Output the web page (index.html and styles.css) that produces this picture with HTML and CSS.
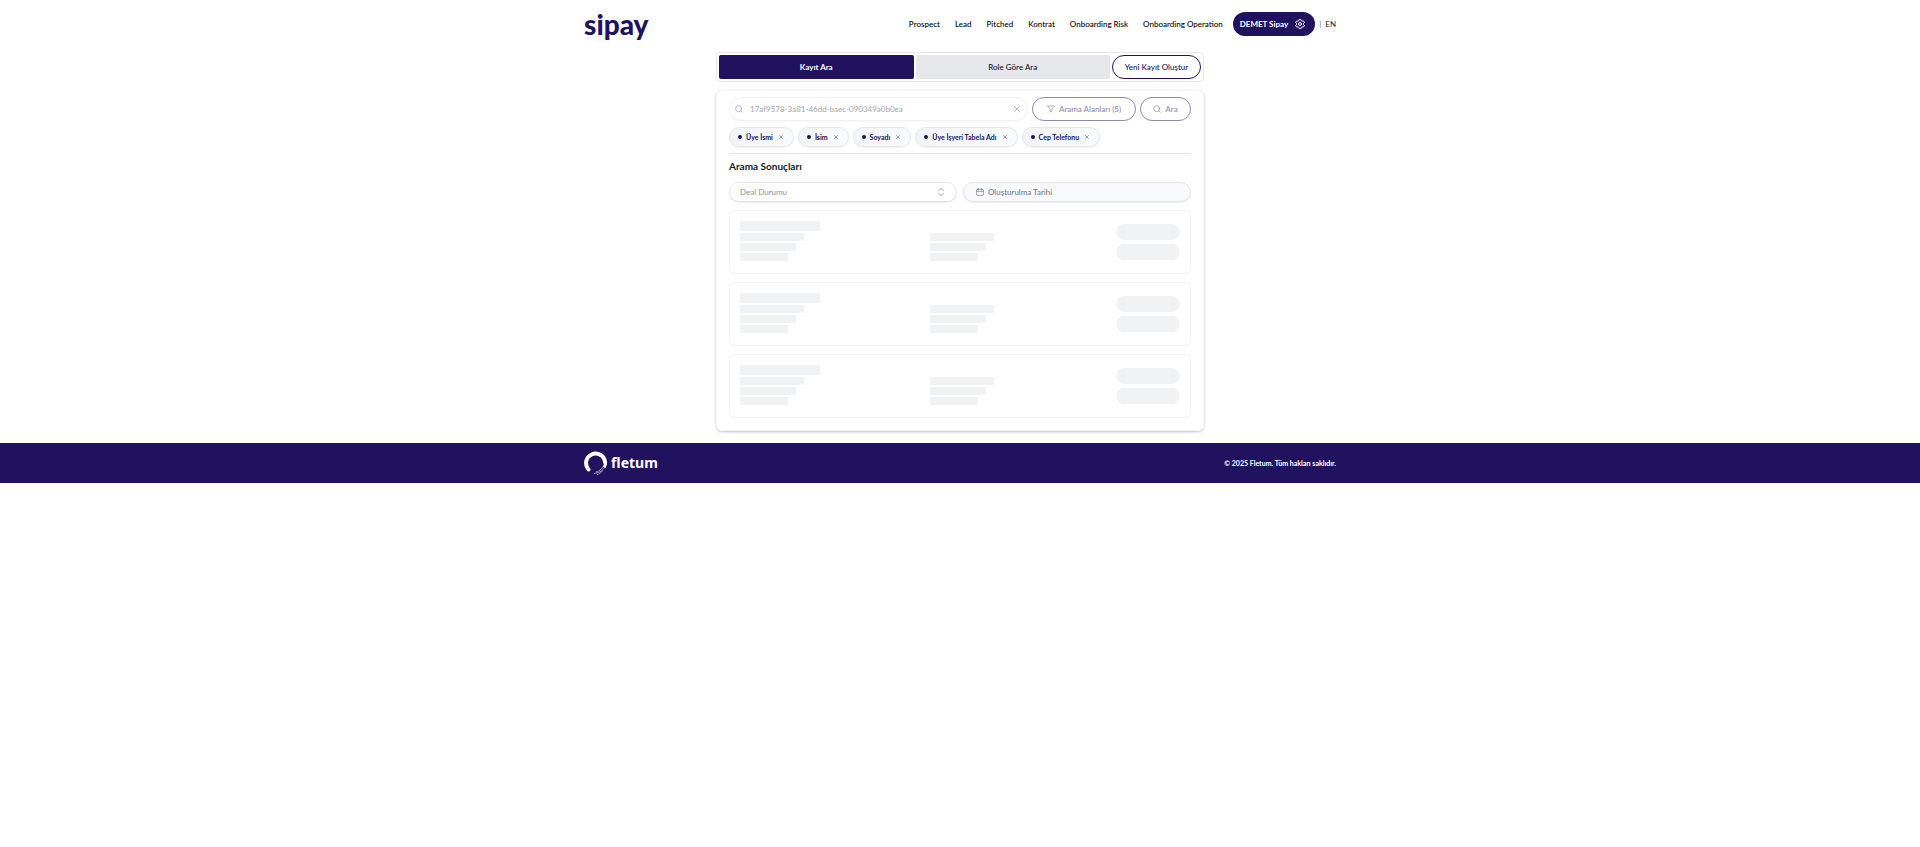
FILE: index.html
```html
<!DOCTYPE html>
<html lang="tr">
<head>
<meta charset="utf-8">
<meta name="viewport" content="width=device-width, initial-scale=1">
<title>Sipay</title>
<link rel="stylesheet" href="styles.css">
</head>
<body>
<header class="container header">
  <a class="brand" href="#">sipay</a>
  <div class="header-right">
    <nav class="nav">
      <a href="#">Prospect</a>
      <a href="#">Lead</a>
      <a href="#">Pitched</a>
      <a href="#">Kontrat</a>
      <a href="#">Onboarding Risk</a>
      <a href="#">Onboarding Operation</a>
    </nav>
    <button class="user" type="button">DEMET Sipay
      <svg class="gear" viewBox="0 0 24 24"><path d="M9.6 3.9c.1-.5.5-.9 1.1-.9h2.6c.5 0 1 .4 1.1.9l.2 1.3c.1.4.3.7.6.9l.3.1c.3.2.7.2 1.1.1l1.2-.5c.5-.2 1.1 0 1.4.5l1.3 2.2c.3.5.2 1.1-.3 1.4l-1 .8c-.3.3-.4.6-.4 1v.6c0 .4.1.7.4 1l1 .8c.4.4.5 1 .3 1.4l-1.3 2.2c-.3.5-.9.7-1.4.5l-1.2-.4c-.4-.1-.8-.1-1.1.1l-.2.1c-.3.2-.6.5-.6.9l-.2 1.3c-.1.5-.6.9-1.1.9h-2.6c-.5 0-1-.4-1.1-.9l-.2-1.3c-.1-.4-.3-.7-.6-.9l-.3-.1c-.3-.2-.7-.2-1.1-.1l-1.2.4c-.5.2-1.1 0-1.4-.5l-1.3-2.2c-.3-.5-.2-1.1.3-1.4l1-.8c.3-.3.4-.6.4-1v-.6c0-.4-.1-.7-.4-1l-1-.8c-.4-.4-.5-1-.3-1.4l1.3-2.2c.3-.5.9-.7 1.4-.5l1.2.5c.4.1.8.1 1.1-.1l.2-.1c.3-.2.6-.5.6-.9z"/><circle cx="12" cy="12" r="3"/></svg>
    </button>
    <span class="divider">|</span>
    <a class="lang" href="#">EN</a>
  </div>
</header>

<main class="main">
  <div class="tabs">
    <button class="tab tab-active" type="button">Kayıt Ara</button>
    <button class="tab" type="button">Role Göre Ara</button>
    <button class="outline create" type="button">Yeni Kayıt Oluştur</button>
  </div>

  <section class="panel">
    <form class="search-row">
      <div class="search">
        <svg class="icon" viewBox="0 0 24 24"><circle cx="11" cy="11" r="9"/><path d="m22 22-4.500-4.500"/></svg>
        <input type="text" aria-label="Ara" value="17af9578-3a81-46dd-baec-090349a0b0ea" disabled>
        <button class="clear" type="button" aria-label="Temizle"><svg class="icon" viewBox="0 0 24 24"><path d="M4 4l16 16M20 4L4 20"/></svg></button>
      </div>
      <button class="outline fields" type="button" disabled>
        <svg class="icon" viewBox="0 0 24 24"><path d="M2 3h20l-7.500 9.500v5.500l-5 3v-8.500z"/></svg>Arama Alanları (5)</button>
      <button class="outline go" type="button" disabled>
        <svg class="icon" viewBox="0 0 24 24"><circle cx="11" cy="11" r="9"/><path d="m22 22-4.500-4.500"/></svg>Ara</button>
    </form>

    <div class="chips">
      <span class="chip">Üye İsmi<button type="button" aria-label="Üye İsmi kaldır"><svg viewBox="0 0 24 24"><path d="M4 4l16 16M20 4L4 20"/></svg></button></span>
      <span class="chip">İsim<button type="button" aria-label="İsim kaldır"><svg viewBox="0 0 24 24"><path d="M4 4l16 16M20 4L4 20"/></svg></button></span>
      <span class="chip">Soyadı<button type="button" aria-label="Soyadı kaldır"><svg viewBox="0 0 24 24"><path d="M4 4l16 16M20 4L4 20"/></svg></button></span>
      <span class="chip">Üye İşyeri Tabela Adı<button type="button" aria-label="Üye İşyeri Tabela Adı kaldır"><svg viewBox="0 0 24 24"><path d="M4 4l16 16M20 4L4 20"/></svg></button></span>
      <span class="chip">Cep Telefonu<button type="button" aria-label="Cep Telefonu kaldır"><svg viewBox="0 0 24 24"><path d="M4 4l16 16M20 4L4 20"/></svg></button></span>
    </div>

    <h2 class="results-title">Arama Sonuçları</h2>

    <div class="filters">
      <div class="select-wrap">
        <select aria-label="Deal Durumu"><option>Deal Durumu</option></select>
        <svg class="icon select-icon" viewBox="0 0 24 24"><path d="M5 8l7-7 7 7M5 16l7 7 7-7"/></svg>
      </div>
      <button class="date" type="button">
        <svg class="icon" viewBox="0 0 24 24"><rect x="2" y="4" width="20" height="18" rx="2"/><path d="M2 10h20M7 1v5M17 1v5"/></svg>Oluşturulma Tarihi</button>
    </div>

    <div class="results">
      <div class="skeleton">
        <div class="cols"><div class="col"><i class="bar title"></i><i class="bar long"></i><i class="bar mid"></i><i class="bar short"></i></div><div class="col second"><i class="bar long"></i><i class="bar mid"></i><i class="bar short"></i></div></div>
        <div class="actions"><i class="pill"></i><i class="pill"></i></div>
      </div>
      <div class="skeleton">
        <div class="cols"><div class="col"><i class="bar title"></i><i class="bar long"></i><i class="bar mid"></i><i class="bar short"></i></div><div class="col second"><i class="bar long"></i><i class="bar mid"></i><i class="bar short"></i></div></div>
        <div class="actions"><i class="pill"></i><i class="pill"></i></div>
      </div>
      <div class="skeleton">
        <div class="cols"><div class="col"><i class="bar title"></i><i class="bar long"></i><i class="bar mid"></i><i class="bar short"></i></div><div class="col second"><i class="bar long"></i><i class="bar mid"></i><i class="bar short"></i></div></div>
        <div class="actions"><i class="pill"></i><i class="pill"></i></div>
      </div>
    </div>
  </section>
</main>

<footer class="footer">
  <div class="container footer-inner">
    <a class="fletum" href="#">
      <svg class="ring" viewBox="0 0 24 24"><path class="arc" d="M4.500 18.500A9.500 9.500 0 1 1 21 11"/><path class="taper" d="M19.500 10l3.500 0q.3 4-1.500 7l-2.300-1.300q1-3 .3-5.700z"/><path class="dust" d="M20.800 16q-3.300 5.600-10.500 6.500M19.500 15q-3 4.800-7.500 6M18.500 20q-2 2.500-5 3.500"/></svg>
      <span>fletum</span>
    </a>
    <span class="copy">© 2025 Fletum. Tüm hakları saklıdır.</span>
  </div>
</footer>
</body>
</html>
```

FILE: styles.css
```css
:root {
  --navy: #20125f;
  --line: #e5e7eb;
  --soft: #f1f2f4;
  --muted: #8d93a3;
}

* { box-sizing: border-box; }

body {
  margin: 0;
  background: #fff;
  color: #111827;
  font-family: Lato, "Noto Sans", sans-serif;
  font-size: 8px;
  line-height: 12px;
}

a { color: inherit; text-decoration: none; }

button, input, select {
  margin: 0;
  font: inherit;
  color: inherit;
}

button { cursor: pointer; }

.container {
  width: 100%;
  max-width: 768px;
  margin: 0 auto;
  padding: 0 8px;
}

.header {
  display: flex;
  align-items: center;
  justify-content: space-between;
  height: 48px;
}

.brand {
  color: var(--navy);
  font-size: 28px;
  font-weight: 900;
  line-height: 32px;
}

.header-right {
  display: flex;
  align-items: center;
  gap: 4px;
}

.nav {
  display: flex;
  gap: 15px;
  margin-right: 6px;
  font-weight: 500;
  color: #000;
}

.user {
  display: flex;
  align-items: center;
  gap: 6px;
  height: 24px;
  padding: 0 9px 0 7px;
  border: 0;
  border-radius: 12px;
  background: var(--navy);
  color: #fff;
  font-weight: 700;
}

svg {
  fill: none;
  stroke: currentColor;
  stroke-width: 2;
  stroke-linecap: round;
  stroke-linejoin: round;
  flex: none;
}

.gear {
  width: 12px;
  height: 12px;
}

.divider { color: #6b7280; }

.main {
  width: 100%;
  max-width: 488px;
  margin: 0 auto;
  padding: 4px 0 12px;
}

.tabs {
  display: flex;
  gap: 2px;
  padding: 2px;
  border: 1px solid var(--line);
  border-radius: 4px;
}

.tab {
  flex: 1;
  height: 24px;
  padding: 0;
  border: 0;
  border-radius: 2px;
  background: var(--line);
  font-weight: 500;
}

.tab-active {
  background: var(--navy);
  color: #fff;
  font-weight: 700;
}

.outline {
  display: flex;
  align-items: center;
  justify-content: center;
  gap: 4px;
  height: 24px;
  padding: 0;
  border: 1px solid var(--navy);
  border-radius: 12px;
  background: #fff;
  color: var(--navy);
  font-weight: 500;
  white-space: nowrap;
}

.outline:disabled { opacity: 0.5; }

.create { width: 89px; }
.fields { width: 104px; }
.go { width: 51px; }

.icon {
  width: 8px;
  height: 8px;
}

.panel {
  margin-top: 8px;
  padding: 6px 12px 12px;
  border: 1px solid #f3f4f6;
  border-radius: 6px;
  box-shadow: 0 1px 3px rgba(0, 0, 0, 0.15), 0 1px 2px rgba(0, 0, 0, 0.1);
}

.search-row {
  display: flex;
  gap: 4px;
}

.search {
  flex: 1;
  display: flex;
  align-items: center;
  gap: 7px;
  height: 24px;
  padding: 0 6px 0 5px;
  border: 1px solid #f1f2f4;
  border-radius: 12px;
  box-shadow: 0 1px 1px rgba(0, 0, 0, 0.03);
  color: #9297aa;
}

.search input {
  flex: 1;
  min-width: 0;
  padding: 0;
  border: 0;
  background: none;
  color: #a3a6ae;
}

.clear {
  display: flex;
  padding: 0;
  border: 0;
  background: none;
}

.chips {
  display: flex;
  flex-wrap: wrap;
  gap: 4px;
  padding: 6px 0;
  border-bottom: 1px solid var(--line);
}

.chip {
  display: flex;
  align-items: center;
  gap: 4px;
  height: 20px;
  padding: 0 10px 0 8px;
  border: 1px solid var(--line);
  border-radius: 10px;
  background: linear-gradient(90deg, #f3f4f6, #fafbfd);
  box-shadow: 0 1px 1px rgba(0, 0, 0, 0.05);
  color: var(--navy);
  font-size: 7px;
  font-weight: 700;
}

.chip::before {
  content: "";
  width: 4px;
  height: 4px;
  border-radius: 50%;
  background: var(--navy);
}

.chip button {
  display: flex;
  margin-left: 2px;
  padding: 0;
  border: 0;
  background: none;
  color: #6b6590;
}

.chip svg {
  width: 4px;
  height: 4px;
  stroke-width: 4;
}

.results-title {
  margin: 5px 0 9px;
  font-size: 10px;
  line-height: 14px;
  font-weight: 700;
}

.filters {
  display: grid;
  grid-template-columns: 1fr 1fr;
  gap: 6px;
}

.select-wrap { position: relative; }

.select-wrap select, .date {
  width: 100%;
  height: 20px;
  padding: 0 10px;
  border: 1px solid var(--line);
  border-radius: 10px;
  background: #fff;
  box-shadow: 0 1px 1px rgba(0, 0, 0, 0.08);
  color: var(--muted);
}

.select-wrap select {
  display: block;
  appearance: none;
}

.select-icon {
  position: absolute;
  top: 6px;
  right: 12px;
  color: #6b7280;
}

.date {
  display: flex;
  align-items: center;
  gap: 4px;
  padding: 0 12px;
  background: #f9fafb;
  color: #6b7280;
}

.results {
  display: flex;
  flex-direction: column;
  gap: 8px;
  margin-top: 8px;
}

.skeleton {
  display: flex;
  align-items: center;
  padding: 10px;
  border: 1px solid #f1f2f4;
  border-radius: 5px;
}

.cols {
  flex: 1;
  display: grid;
  grid-template-columns: 1fr 1fr;
  gap: 4px;
}

.col {
  display: flex;
  flex-direction: column;
  gap: 2px;
  padding-bottom: 2px;
}

.second { padding-top: 12px; }

.bar {
  height: 8px;
  border-radius: 1px;
  background: var(--soft);
}

.title { width: 80px; height: 10px; }
.long { width: 64px; }
.mid { width: 56px; }
.short { width: 48px; }

.actions {
  display: flex;
  flex-direction: column;
  gap: 4px;
}

.pill {
  width: 64px;
  height: 16px;
  border-radius: 8px;
  background: var(--soft);
}

.footer {
  background: var(--navy);
  color: #fff;
}

.footer-inner {
  display: flex;
  align-items: center;
  justify-content: space-between;
  height: 40px;
}

.fletum {
  display: flex;
  align-items: center;
  gap: 3px;
  font-family: "Noto Sans", sans-serif;
  font-size: 14px;
  font-weight: 700;
  line-height: 20px;
}

.ring { width: 24px; height: 24px; }
.arc { stroke-width: 4; }
.taper { fill: #fff; stroke: none; }
.dust { stroke-width: 1; stroke-dasharray: 2 1; opacity: 0.6; }

.copy { font-size: 7px; font-weight: 700; }
```
